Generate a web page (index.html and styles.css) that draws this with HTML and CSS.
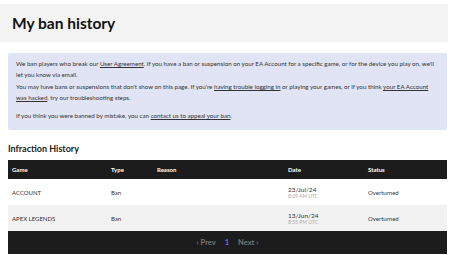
FILE: index.html
```html
<!DOCTYPE html>
<html lang="en">
<head>
    <meta charset="UTF-8">
    <meta name="viewport" content="width=device-width, initial-scale=1.0">
    <title>My ban history</title>
    <link rel="stylesheet" href="styles.css">
</head>
<body>

<div class="page-header">
    <h1>My ban history</h1>
</div>

<div class="content">
    <!-- Info notice -->
    <div class="notice">
        <p>We ban players who break our <a href="#">User Agreement</a>. If you have a ban or suspension on your EA Account for a specific game, or for the device you play on, we'll let you know via email.</p>
        <p>You may have bans or suspensions that don't show on this page. If you're <a href="#">having trouble logging in</a> or playing your games, or if you think <a href="#">your EA Account was hacked</a>, try our troubleshooting steps.</p>
        <p class="spaced">If you think you were banned by mistake, you can <a href="#">contact us to appeal your ban</a>.</p>
    </div>

    <h2>Infraction History</h2>

    <table class="history">
        <thead>
            <tr>
                <th class="col-game">Game</th>
                <th class="col-type">Type</th>
                <th class="col-reason">Reason</th>
                <th class="col-date">Date</th>
                <th class="col-status">Status</th>
            </tr>
        </thead>
        <tbody>
            <tr>
                <td>ACCOUNT</td>
                <td>Ban</td>
                <td></td>
                <td><span class="date">23/Jul/24</span><span class="time">8:09 AM UTC</span></td>
                <td>Overturned</td>
            </tr>
            <tr class="alt">
                <td>APEX LEGENDS</td>
                <td>Ban</td>
                <td></td>
                <td><span class="date">13/Jun/24</span><span class="time">8:55 PM UTC</span></td>
                <td>Overturned</td>
            </tr>
        </tbody>
    </table>

    <div class="pager">
        <span class="pager-link">&lsaquo; Prev</span>
        <span class="pager-current">1</span>
        <span class="pager-link">Next &rsaquo;</span>
    </div>
</div>

</body>
</html>
```

FILE: styles.css
```css
body {
    margin: 0;
    padding: 0;
    background-color: #fff;
    color: #222;
    font-family: Lato, "Open Sans", sans-serif;
}

.page-header {
    margin: 4px 2px 0 0;
    height: 38px;
    background-color: #f3f3f3;
    display: flex;
    align-items: center;
    padding-left: 12px;
}

h1 {
    margin: 0;
    font-size: 15.5px;
    font-weight: 700;
    color: #111;
}

.content {
    padding: 11px 3px 0 8px;
}

.notice {
    background-color: #e1e4f4;
    padding: 5px 8px 9px 8px;
    font-size: 6.2px;
    line-height: 11px;
    color: #333;
    border-radius: 2px;
}

.notice p {
    margin: 0;
}

.notice p + p {
    margin-top: 1px;
}

.notice p.spaced {
    margin-top: 7px;
}

.notice a {
    color: #333;
}

h2 {
    margin: 13px 0 6px 0;
    font-size: 9px;
    font-weight: 700;
    color: #222;
}

.history {
    width: 100%;
    border-collapse: collapse;
    table-layout: fixed;
    font-size: 6px;
    color: #333;
}

.history th,
.history td {
    box-sizing: border-box;
    padding: 0 0 0 4px;
    text-align: left;
}

.history th {
    background-color: #1c1c1c;
    color: #fff;
    font-weight: 700;
    height: 19px;
}

.history td {
    height: 26px;
    background-color: #fff;
}

.history tr.alt td {
    background-color: #f2f2f2;
}

.col-game { width: 99px; }
.col-type { width: 46px; }
.col-reason { width: 131px; }
.col-date { width: 80px; }

.date {
    display: block;
    font-size: 6.5px;
    color: #333;
}

.time {
    display: block;
    font-size: 5px;
    color: #aaa;
}

.pager {
    background-color: #1c1c1c;
    height: 23px;
    display: flex;
    align-items: center;
    justify-content: center;
    gap: 9px;
    font-size: 7.5px;
    font-weight: 700;
    color: #777;
}

.pager-current {
    color: #6f6ce0;
}
```
